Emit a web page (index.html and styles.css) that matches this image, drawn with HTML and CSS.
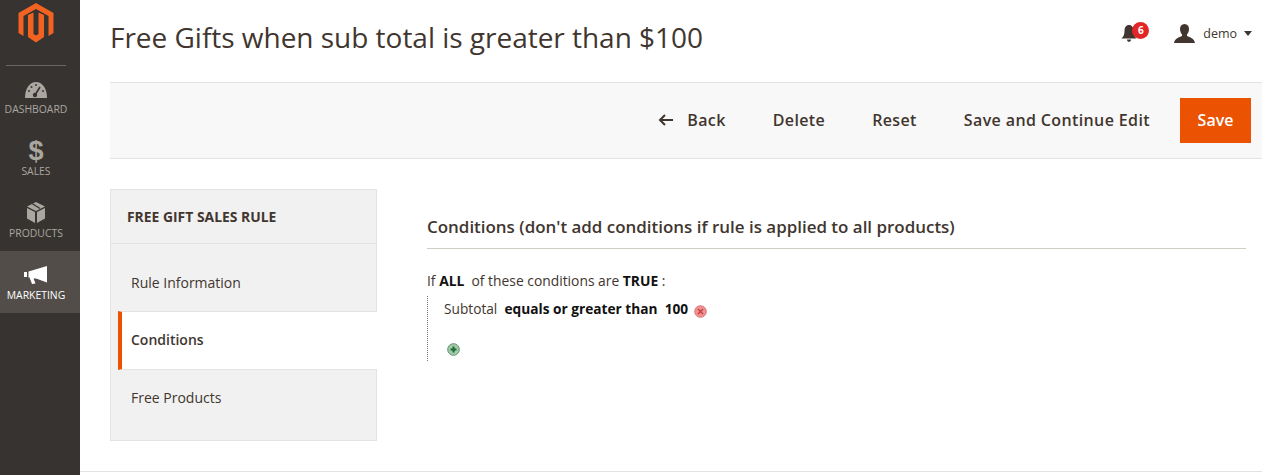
FILE: index.html
```html
<!DOCTYPE html>
<html lang="en">
<head>
    <meta charset="UTF-8">
    <meta name="viewport" content="width=device-width, initial-scale=1.0">
    <title>Free Gifts</title>
    <link rel="stylesheet" href="styles.css">
</head>
<body>

<aside class="sidebar">
    <div class="logo">
        <svg width="36" height="40" viewBox="0 0 36 40">
            <path fill="#f26322" d="M18 0 L35.5 10 V30 L30.5 33 V13 L18 6 L5.5 13 V33 L0.5 30 V10 Z"/>
            <path fill="#f26322" d="M10 12 L15.5 9.5 V31 L18 32.5 L20.5 31 V9.5 L26 12 V34 L18 39.5 L10 34 Z"/>
        </svg>
    </div>
    <div class="logo-line"></div>
    <nav class="menu">
        <div class="menu-item">
            <svg class="menu-icon" width="24" height="18" viewBox="0 0 24 18">
                <path fill="#aaa6a0" d="M1 17 C1 7 6 1 12 1 C18 1 23 7 23 17 Z"/>
                <path stroke="#3a3330" stroke-width="1.6" d="M11 14 L16 6"/>
                <circle cx="11" cy="14" r="2.2" fill="#3a3330"/>
                <g fill="#3a3330"><circle cx="5" cy="10" r="1"/><circle cx="7.5" cy="6" r="1"/><circle cx="12" cy="4" r="1"/><circle cx="19" cy="10" r="1"/></g>
            </svg>
            <span>DASHBOARD</span>
        </div>
        <div class="menu-item">
            <div class="dollar">$</div>
            <span>SALES</span>
        </div>
        <div class="menu-item">
            <svg class="menu-icon" width="20" height="21" viewBox="0 0 20 21">
                <path fill="#aaa6a0" d="M10 0 L19 4.5 L10 9 L1 4.5 Z"/>
                <path fill="#aaa6a0" d="M1 6 L9 10 V21 L1 16.5 Z"/>
                <path fill="#aaa6a0" d="M19 6 L11 10 V21 L19 16.5 Z"/>
                <path stroke="#3a3330" stroke-width="1.4" d="M6 1.5 L14 6.5"/>
            </svg>
            <span>PRODUCTS</span>
        </div>
        <div class="menu-item active">
            <svg class="menu-icon" width="24" height="20" viewBox="0 0 24 20">
                <path fill="#fff" d="M0 7 H3 V12 H0 Z"/>
                <path fill="#fff" d="M4.5 6.5 L23 1 V17.5 L12 13.5 L9.5 13.5 L11.5 18.5 L8 19 L5.5 12.5 L4.5 12.5 Z"/>
            </svg>
            <span>MARKETING</span>
        </div>
    </nav>
</aside>

<main class="page">
    <header class="page-header">
        <h1>Free Gifts when sub total is greater than $100</h1>
        <div class="actions-top">
            <div class="notice">
                <svg width="16" height="17" viewBox="0 0 16 17">
                    <path fill="#41362f" d="M8 0 C11 0 12.5 2.5 12.5 6 C12.5 9.5 13.5 11.5 15.5 13.5 H0.5 C2.5 11.5 3.5 9.5 3.5 6 C3.5 2.5 5 0 8 0 Z"/>
                    <path fill="#41362f" d="M6 14.5 H10 C10 16 9 16.8 8 16.8 C7 16.8 6 16 6 14.5 Z"/>
                </svg>
                <span class="badge">6</span>
            </div>
            <div class="user">
                <svg width="21" height="19" viewBox="0 0 21 19">
                    <path fill="#41362f" d="M10.5 0 C13.5 0 15 2.2 15 5 C15 7.5 14 9.5 13 10.5 V12 C16 13.5 20 14 21 19 H0 C1 14 5 13.5 8 12 V10.5 C7 9.5 6 7.5 6 5 C6 2.2 7.5 0 10.5 0 Z"/>
                </svg>
                <span class="user-name">demo</span>
                <span class="caret"></span>
            </div>
        </div>
    </header>

    <div class="toolbar">
        <a class="tool-btn back">
            <svg width="16" height="12" viewBox="0 0 16 12">
                <path fill="none" stroke="#41362f" stroke-width="2" d="M15 6 H2 M7 1 L2 6 L7 11"/>
            </svg>
            Back
        </a>
        <a class="tool-btn">Delete</a>
        <a class="tool-btn">Reset</a>
        <a class="tool-btn">Save and Continue Edit</a>
        <a class="save-btn">Save</a>
    </div>

    <div class="content">
        <div class="tabs">
            <div class="tabs-title">FREE GIFT SALES RULE</div>
            <div class="tab first">Rule Information</div>
            <div class="tab selected">Conditions</div>
            <div class="tab last">Free Products</div>
        </div>
        <section class="conditions">
            <h2>Conditions (don't add conditions if rule is applied to all products)</h2>
            <p class="cond-line">If <b>ALL</b>&nbsp; of these conditions are <b>TRUE</b> :</p>
            <div class="cond-tree">
                <div class="cond-row">
                    Subtotal&nbsp; <b>equals or greater than&nbsp; 100</b>
                    <svg class="rule-icon" width="13" height="13" viewBox="0 0 13 13">
                        <circle cx="6.5" cy="6.5" r="5.8" fill="#f09090" stroke="#d97a7a"/>
                        <path stroke="#c23a3a" stroke-width="1.2" d="M4 4 L9 9 M9 4 L4 9"/>
                    </svg>
                </div>
                <div class="cond-add">
                    <svg width="13" height="13" viewBox="0 0 13 13">
                        <circle cx="6.5" cy="6.5" r="5.8" fill="#a3cbaa" stroke="#5c8f6b"/>
                        <path stroke="#1f6b35" stroke-width="2" d="M3.5 6.5 H9.5 M6.5 3.5 V9.5"/>
                    </svg>
                </div>
            </div>
        </section>
    </div>
    <div class="footer-line"></div>
</main>

</body>
</html>
```

FILE: styles.css
```css
body {
    margin: 0;
    height: 475px;
    overflow: hidden;
    display: flex;
    font-family: "Open Sans", sans-serif;
    color: #41362f;
    background-color: #fff;
}

.sidebar {
    width: 80px;
    flex-shrink: 0;
    background-color: #373330;
}

.logo {
    height: 41px;
    padding-top: 3px;
    padding-right: 8px;
    display: flex;
    justify-content: center;
}

.logo-line {
    width: 60px;
    margin: 21px 0 0 6px;
    border-top: 1px solid #6b6663;
}

.menu {
    margin-top: -1px;
}

.menu-item {
    height: 62px;
    padding-right: 8px;
    display: flex;
    flex-direction: column;
    align-items: center;
    justify-content: flex-end;
    font-size: 10.4px;
    line-height: 14px;
    color: #aaa6a0;
}

.menu-item span {
    margin-bottom: 11px;
}

.menu-icon {
    margin-bottom: 3px;
}

.dollar {
    font-family: "Liberation Sans", sans-serif;
    font-weight: bold;
    font-size: 27px;
    line-height: 25px;
}

.menu-item.active {
    background-color: #524d49;
    color: #fff;
}

.page {
    flex: 1;
    padding-left: 30px;
    min-width: 0;
}

.page-header {
    height: 82px;
    display: flex;
    justify-content: space-between;
    align-items: flex-start;
}

.page-header h1 {
    margin: 18px 0 0;
    font-size: 28px;
    line-height: 38px;
    font-weight: 400;
    letter-spacing: -0.02px;
}

.actions-top {
    display: flex;
    align-items: center;
    margin-top: 22px;
    height: 22px;
}

.notice {
    position: relative;
    width: 16px;
    height: 17px;
    margin-right: 37px;
}

.badge {
    position: absolute;
    left: 11px;
    top: -3px;
    width: 17px;
    height: 17px;
    border-radius: 50%;
    background-color: #e22626;
    color: #fff;
    font-size: 10px;
    font-weight: 700;
    line-height: 17px;
    text-align: center;
}

.user {
    display: flex;
    align-items: center;
    font-size: 12.5px;
    margin-right: 10px;
}

.user-name {
    margin-left: 8px;
}

.caret {
    margin-left: 7px;
    border-top: 5px solid #41362f;
    border-left: 4px solid transparent;
    border-right: 4px solid transparent;
}

.toolbar {
    height: 75px;
    display: flex;
    align-items: center;
    justify-content: flex-end;
    padding-right: 11px;
    background-color: #f8f8f8;
    border-top: 1px solid #e3e3e3;
    border-bottom: 1px solid #e3e3e3;
}

.tool-btn {
    margin-right: 47px;
    padding-bottom: 2px;
    font-size: 16px;
    font-weight: 600;
    letter-spacing: 0.38px;
}

.tool-btn:nth-child(4) {
    margin-right: 30px;
}

.back svg {
    margin-right: 9px;
}

.save-btn {
    width: 71px;
    height: 45px;
    line-height: 44px;
    text-align: center;
    background-color: #eb5202;
    color: #fff;
    font-size: 16px;
    font-weight: 600;
}

.content {
    display: flex;
    margin-top: 30px;
}

.tabs {
    width: 267px;
    height: 252px;
    flex-shrink: 0;
    box-sizing: border-box;
    background-color: #f1f1f1;
    border: 1px solid #e3e3e3;
}

.tabs-title {
    height: 54px;
    padding-left: 16px;
    box-sizing: border-box;
    border-bottom: 1px solid #e3e3e3;
    font-size: 13.9px;
    line-height: 54px;
    font-weight: 700;
}

.tab {
    padding-left: 20px;
    font-size: 14px;
}

.tab.first {
    height: 57px;
    padding-top: 10px;
    line-height: 57px;
}

.tab.selected {
    box-sizing: border-box;
    height: 59px;
    line-height: 55px;
    padding-left: 9px;
    margin-left: 7px;
    margin-right: -1px;
    border-left: 4px solid #eb5202;
    background-color: #fff;
    font-weight: 600;
    border-top: 1px solid #e3e3e3;
    border-bottom: 1px solid #e3e3e3;
}

.tab.last {
    line-height: 56px;
}

.conditions {
    flex: 1;
    margin-left: 50px;
    margin-right: 16px;
}

.conditions h2 {
    margin: 27px 0 0;
    padding-bottom: 11px;
    border-bottom: 1px solid #cfcfc0;
    font-size: 16.95px;
    line-height: 21px;
    font-weight: 600;
}

.cond-line {
    margin: 22px 0 0;
    font-size: 13.85px;
    line-height: 20px;
}

.cond-tree {
    margin-top: 5px;
    padding-left: 16px;
    border-left: 1px dotted #777;
    height: 65px;
    font-size: 13.7px;
}

.cond-row {
    line-height: 20px;
    padding-top: 3px;
}

.rule-icon {
    vertical-align: -4px;
    margin-left: 2px;
}

.cond-add {
    margin-top: 22px;
    padding-left: 3px;
}

.footer-line {
    margin-top: 30px;
    margin-left: -30px;
    border-top: 1px solid #e3e3e3;
}

b {
    font-weight: 700;
    color: #111;
}
```
